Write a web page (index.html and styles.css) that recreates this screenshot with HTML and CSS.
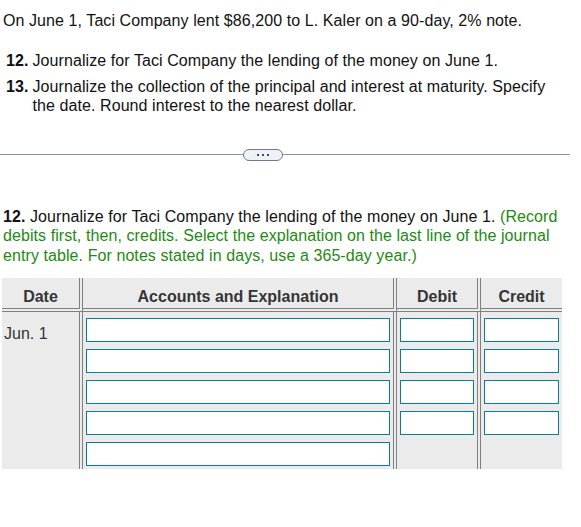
FILE: index.html
```html
<!DOCTYPE html>
<html>
<head>
<meta charset="utf-8">
<link rel="stylesheet" href="styles.css">
</head>
<body>
<div class="page">
  <p class="intro">On June 1, Taci Company lent $86,200 to L. Kaler on a 90-day, 2% note.</p>
  <ol class="tasks">
    <li><span class="num">12.</span><span class="txt">Journalize for Taci Company the lending of the money on June 1.</span></li>
    <li><span class="num">13.</span><span class="txt">Journalize the collection of the principal and interest at maturity. Specify the date. Round interest to the nearest dollar.</span></li>
  </ol>
  <div class="divider">
    <span class="rule rule-left"></span>
    <button class="more" type="button" aria-label="more">
      <svg width="40" height="12" viewBox="0 0 40 12"><rect x="0.5" y="0.5" width="39" height="11" rx="5.5" ry="5.5" fill="#eef1f5" stroke="#6f7b8a"/><rect x="14" y="5" width="2" height="2" fill="#3f4b5b"/><rect x="19" y="5" width="2" height="2" fill="#3f4b5b"/><rect x="24" y="5" width="2" height="2" fill="#3f4b5b"/></svg>
    </button>
    <span class="rule rule-right"></span>
  </div>
  <p class="question"><b>12.</b> Journalize for Taci Company the lending of the money on June 1. <span class="hint">(Record debits first, then, credits. Select the explanation on the last line of the journal entry table. For notes stated in days, use a 365-day year.)</span></p>
  <div class="jtable">
    <div class="hd c-date">Date</div>
    <div class="hd c-acct">Accounts and Explanation</div>
    <div class="hd c-debit">Debit</div>
    <div class="hd c-credit">Credit</div>
    <div class="bd c-date"><span class="date">Jun. 1</span></div>
    <div class="bd c-acct">
      <input class="in in-acct" type="text">
      <input class="in in-acct" type="text">
      <input class="in in-acct" type="text">
      <input class="in in-acct" type="text">
      <input class="in in-acct" type="text">
    </div>
    <div class="bd c-debit">
      <input class="in in-amt" type="text">
      <input class="in in-amt" type="text">
      <input class="in in-amt" type="text">
      <input class="in in-amt" type="text">
    </div>
    <div class="bd c-credit">
      <input class="in in-amt2" type="text">
      <input class="in in-amt2" type="text">
      <input class="in in-amt2" type="text">
      <input class="in in-amt2" type="text">
    </div>
  </div>
</div>
</body>
</html>
```
FILE: styles.css
```css
html, body {
  margin: 0;
  padding: 0;
  background: #fff;
}
body {
  font-family: "Liberation Sans", Arial, sans-serif;
  font-size: 16px;
  line-height: 19.2px;
  color: #111;
}
.page {
  padding: 11px 0 0 3px;
  width: 567px;
}
.intro, .tasks, .question {
  letter-spacing: 0.08px;
}
.intro {
  margin: 0;
}
.tasks {
  list-style: none;
  margin: 21px 0 0 0;
  padding: 0;
  display: flex;
  flex-direction: column;
  gap: 6.4px;
}
.tasks li {
  display: flex;
}
.num {
  font-weight: bold;
  padding-left: 3px;
  flex: none;
  box-sizing: border-box;
  width: 29.5px;
}
.txt {
  flex: 1;
  padding-right: 20px;
}
.divider {
  display: flex;
  align-items: center;
  margin: 33.4px 0 0 -3px;
  width: 570px;
  height: 12px;
}
.rule {
  height: 1px;
  background: #8b94a1;
}
.rule-left {
  width: 243px;
}
.rule-right {
  flex: 1;
}
.more {
  border: 0;
  padding: 0;
  margin: 0;
  background: none;
  width: 40px;
  height: 12px;
  display: block;
}
.more svg {
  display: block;
}
.question {
  margin: 46.5px 0 0 0;
}
.hint {
  color: #1d8a12;
}
.jtable {
  margin: 13.5px 0 0 -1px;
  display: grid;
  grid-template-columns: 81px 314px 84px 81px;
  background: #ebebeb;
  width: 560px;
}
.hd {
  box-sizing: border-box;
  text-align: center;
  font-weight: bold;
  color: #353535;
  padding: 9px 0 2px;
  height: 34px;
  border-bottom: 4px double #808080;
}
.c-date, .c-acct, .c-debit {
  border-right: 4px double #808080;
}
.bd {
  display: flex;
  flex-direction: column;
  gap: 7px;
  padding: 6px 3px 3px;
}
.bd.c-date {
  padding: 12px 0 0 2px;
  color: #333;
}
.date {
  display: block;
}
.in {
  box-sizing: border-box;
  height: 24px;
  margin: 0;
  border: 1px solid #0b7b9c;
  background: #fff;
  padding: 0 4px;
  font: inherit;
  display: block;
}
.in-acct { width: 304px; }
.in-amt { width: 74px; }
.in-amt2 { width: 75px; }
```
